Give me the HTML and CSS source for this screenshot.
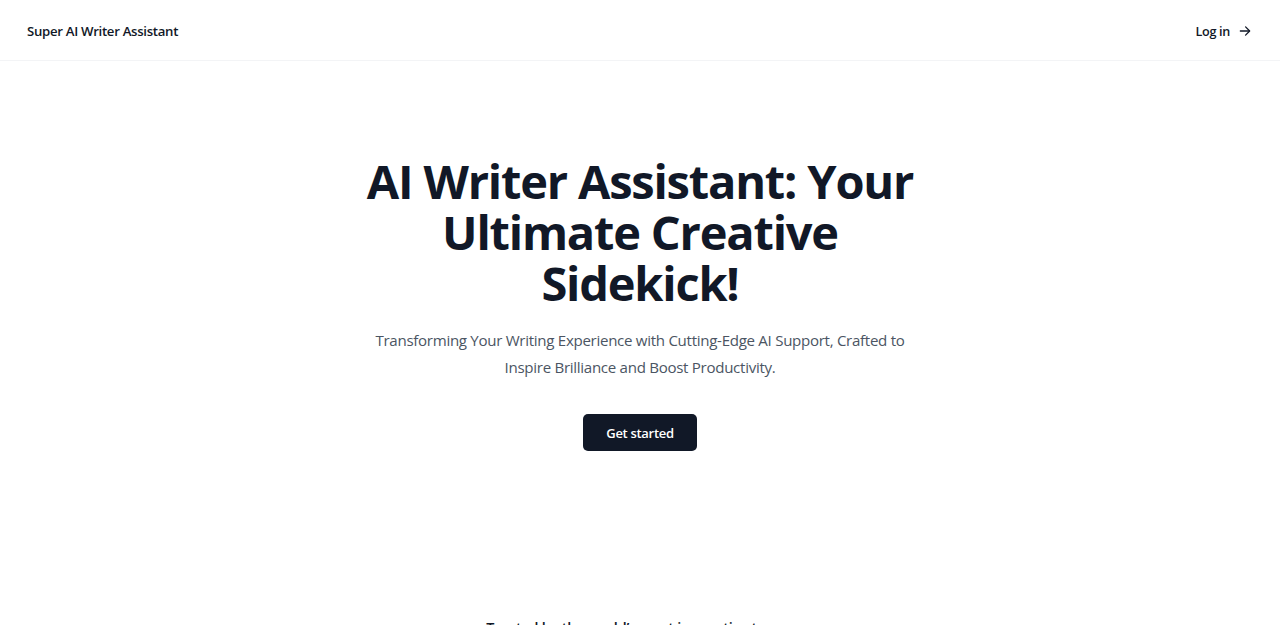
FILE: index.html
```html
<!DOCTYPE html>
<html lang="en">
<head>
<meta charset="utf-8">
<title>Super AI Writer Assistant</title>
<link rel="stylesheet" href="styles.css">
</head>
<body>
<header class="topbar">
  <a class="brand" href="#">Super AI Writer Assistant</a>
  <a class="login" href="#">Log in
    <svg class="arrow" width="14" height="14" viewBox="0 0 24 24" fill="none" stroke="currentColor" stroke-width="2.2" stroke-linecap="round" stroke-linejoin="round"><path d="M4 12h15"/><path d="M13 5l7 7-7 7"/></svg>
  </a>
</header>
<main class="hero">
  <h1 class="title">AI Writer Assistant: Your Ultimate Creative Sidekick!</h1>
  <p class="lead">Transforming Your Writing Experience with Cutting-Edge AI Support, Crafted to Inspire Brilliance and Boost Productivity.</p>
  <div class="actions"><a class="cta" href="#">Get started</a></div>
</main>
<section class="trusted">
  <h2 class="trusted-title">Trusted by the world’s most innovative teams</h2>
</section>
</body>
</html>
```
FILE: styles.css
```css
* { box-sizing: border-box; }
html, body { margin: 0; padding: 0; }
body {
  font-family: "Open Sans", "Noto Sans", sans-serif;
  color: #111827;
  background: #fff;
  overflow: hidden;
}
a { text-decoration: none; color: inherit; }
.topbar {
  height: 61px;
  display: flex;
  align-items: center;
  justify-content: space-between;
  padding: 2px 28px 0 27px;
  border-bottom: 1px solid #f3f4f6;
}
.brand {
  font-size: 13.2px;
  font-weight: 600;
  color: #111827;
  letter-spacing: -0.3px;
}
.login {
  display: flex;
  align-items: center;
  gap: 8px;
  font-size: 12.6px;
  font-weight: 600;
  letter-spacing: -0.3px;
}
.arrow { display: block; }
.hero {
  max-width: 600px;
  margin: 0 auto;
  padding-top: 95px;
  text-align: center;
}
.title {
  margin: 0;
  font-size: 47px;
  line-height: 51px;
  font-weight: 700;
  letter-spacing: -1.2px;
  color: #111827;
}
.lead {
  max-width: 534px;
  margin: 18px auto 0;
  font-size: 15.1px;
  line-height: 27px;
  color: #4b5563;
  letter-spacing: -0.3px;
}
.actions {
  margin-top: 33px;
  display: flex;
  justify-content: center;
}
.cta {
  display: inline-flex;
  align-items: center;
  justify-content: center;
  width: 114px;
  height: 37px;
  background: #111827;
  color: #fff;
  border-radius: 5px;
  font-size: 13px;
  font-weight: 600;
  letter-spacing: -0.3px;
}
.trusted {
  padding-top: 167px;
  text-align: center;
}
.trusted-title {
  margin: 0;
  font-size: 14.4px;
  line-height: 20px;
  font-weight: 600;
  letter-spacing: -0.2px;
  color: #111827;
}
```
